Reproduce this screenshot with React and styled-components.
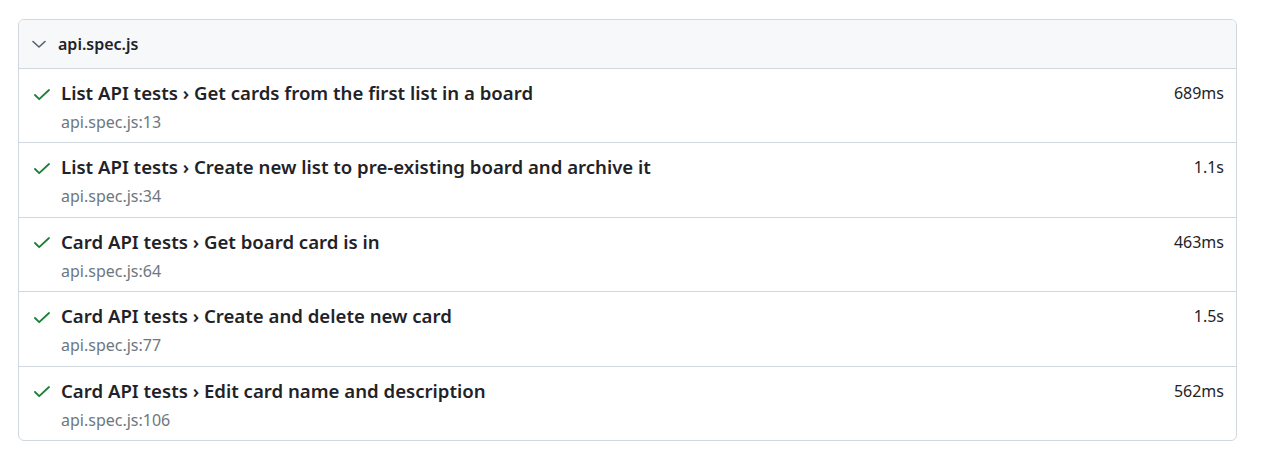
import React from "react";
import styled, { createGlobalStyle } from "styled-components";

const Global = createGlobalStyle`
  html, body { margin: 0; padding: 0; background: #ffffff; }
  body { font-family: "Noto Sans", "Open Sans", sans-serif; color: #1f2328; }
`;

const Page = styled.div`
  padding: 19px 34px 20px 18px;
`;

const Suite = styled.section`
  border: 1px solid #d0d7de;
  border-radius: 6px;
  overflow: hidden;
`;

const SuiteHeader = styled.div`
  display: flex;
  align-items: center;
  gap: 12px;
  height: 48px;
  padding: 0 13px;
  background: #f6f8fa;
  border-bottom: 1px solid #d0d7de;
  font-size: 16px;
  font-weight: 600;
`;

const Row = styled.div`
  display: flex;
  align-items: flex-start;
  padding: 11px 12px 0 15px;
  height: 62.4px;
  box-sizing: content-box;
  & + & { border-top: 1px solid #d0d7de; }
`;

const Status = styled.span`
  width: 16px;
  height: 26px;
  display: flex;
  align-items: center;
  margin-right: 11px;
  color: #1a7f37;
  padding-top: 3px;
  box-sizing: border-box;
`;

const Body = styled.div`
  flex: 1;
  display: flex;
  flex-direction: column;
`;

const Title = styled.div`
  font-size: 18.6px;
  font-weight: 600;
  line-height: 26px;
`;

const Location = styled.div`
  font-size: 16px;
  color: #6e7781;
  line-height: 24px;
  margin-top: 4px;
`;

const Duration = styled.div`
  font-size: 16px;
  line-height: 26px;
  color: #1f2328;
`;

const Chevron = () => (
  <svg width="14" height="14" viewBox="0 0 14 14" fill="none" stroke="#57606a" strokeWidth="1.6" strokeLinecap="round" strokeLinejoin="round">
    <path d="M1 4.5 L7 10 L13 4.5" />
  </svg>
);

const Check = () => (
  <svg width="16" height="12" viewBox="0 0 16 12" fill="none" stroke="currentColor" strokeWidth="1.8" strokeLinecap="round" strokeLinejoin="round">
    <path d="M1 6 L5.2 10.2 L15 1" />
  </svg>
);

const tests = [
  { title: "List API tests › Get cards from the first list in a board", loc: "api.spec.js:13", dur: "689ms" },
  { title: "List API tests › Create new list to pre-existing board and archive it", loc: "api.spec.js:34", dur: "1.1s" },
  { title: "Card API tests › Get board card is in", loc: "api.spec.js:64", dur: "463ms" },
  { title: "Card API tests › Create and delete new card", loc: "api.spec.js:77", dur: "1.5s" },
  { title: "Card API tests › Edit card name and description", loc: "api.spec.js:106", dur: "562ms" },
];

export default function App() {
  return (
    <>
      <Global />
      <Page>
        <Suite>
          <SuiteHeader>
            <Chevron />
            <span>api.spec.js</span>
          </SuiteHeader>
          {tests.map((t) => (
            <Row key={t.loc}>
              <Status><Check /></Status>
              <Body>
                <Title>{t.title}</Title>
                <Location>{t.loc}</Location>
              </Body>
              <Duration>{t.dur}</Duration>
            </Row>
          ))}
        </Suite>
      </Page>
    </>
  );
}
